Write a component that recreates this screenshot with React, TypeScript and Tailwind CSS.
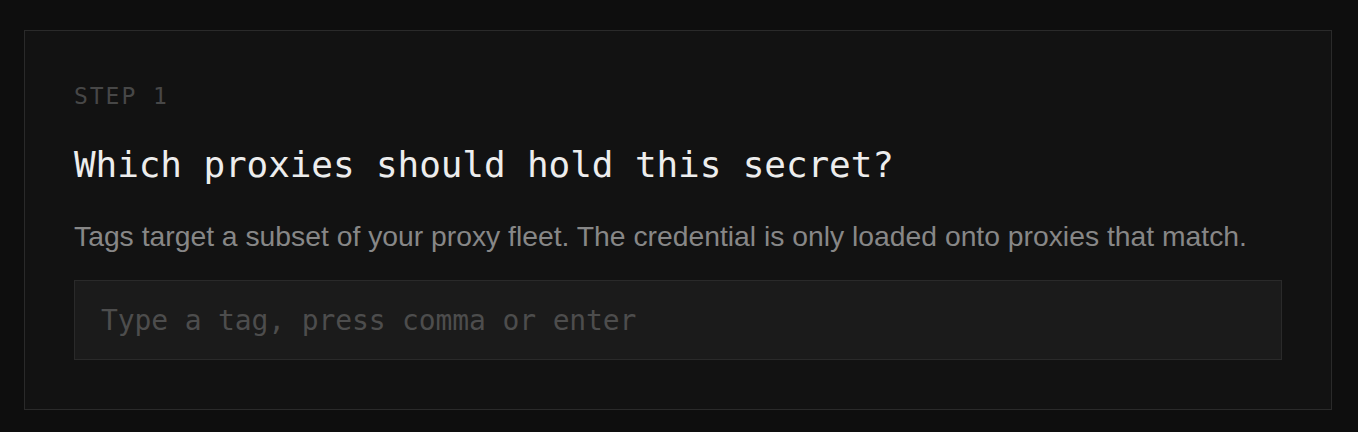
import { useState } from "react";

// Step card: pick which proxies get the secret via tags
export default function App() {
  const [tag, setTag] = useState("");

  return (
    <main className="min-h-screen w-full bg-[#0e0e0e] pl-6 pr-[26px] pt-[30px] pb-[22px]">
      <section className="w-full border border-[#2a2a2a] bg-[#121212] px-[49px] pt-[49px] pb-[49px]">
        <p className="font-['DejaVu_Sans_Mono',monospace] text-[23px] leading-[32px] tracking-[0.085em] text-[#474747]">
          STEP 1
        </p>
        <h2 className="mt-[31px] font-['DejaVu_Sans_Mono',monospace] text-[36px] leading-[44px] tracking-[-0.1px] text-[#ededed]">
          Which proxies should hold this secret?
        </h2>
        <p className="mt-[35px] font-['Liberation_Sans',Arial,sans-serif] text-[28.3px] leading-[28px] text-[#878787]">
          Tags target a subset of your proxy fleet. The credential is only loaded onto proxies that match.
        </p>
        <input
          value={tag}
          onChange={(e) => setTag(e.target.value)}
          placeholder="Type a tag, press comma or enter"
          className="mt-[30px] block h-[80px] w-full border border-[#2a2a2a] bg-[#1b1b1b] px-[26px] font-['DejaVu_Sans_Mono',monospace] text-[28px] leading-[28px] tracking-[-0.13px] text-[#d4d4d4] outline-none placeholder:text-[#4d4d4d]"
        />
      </section>
    </main>
  );
}
